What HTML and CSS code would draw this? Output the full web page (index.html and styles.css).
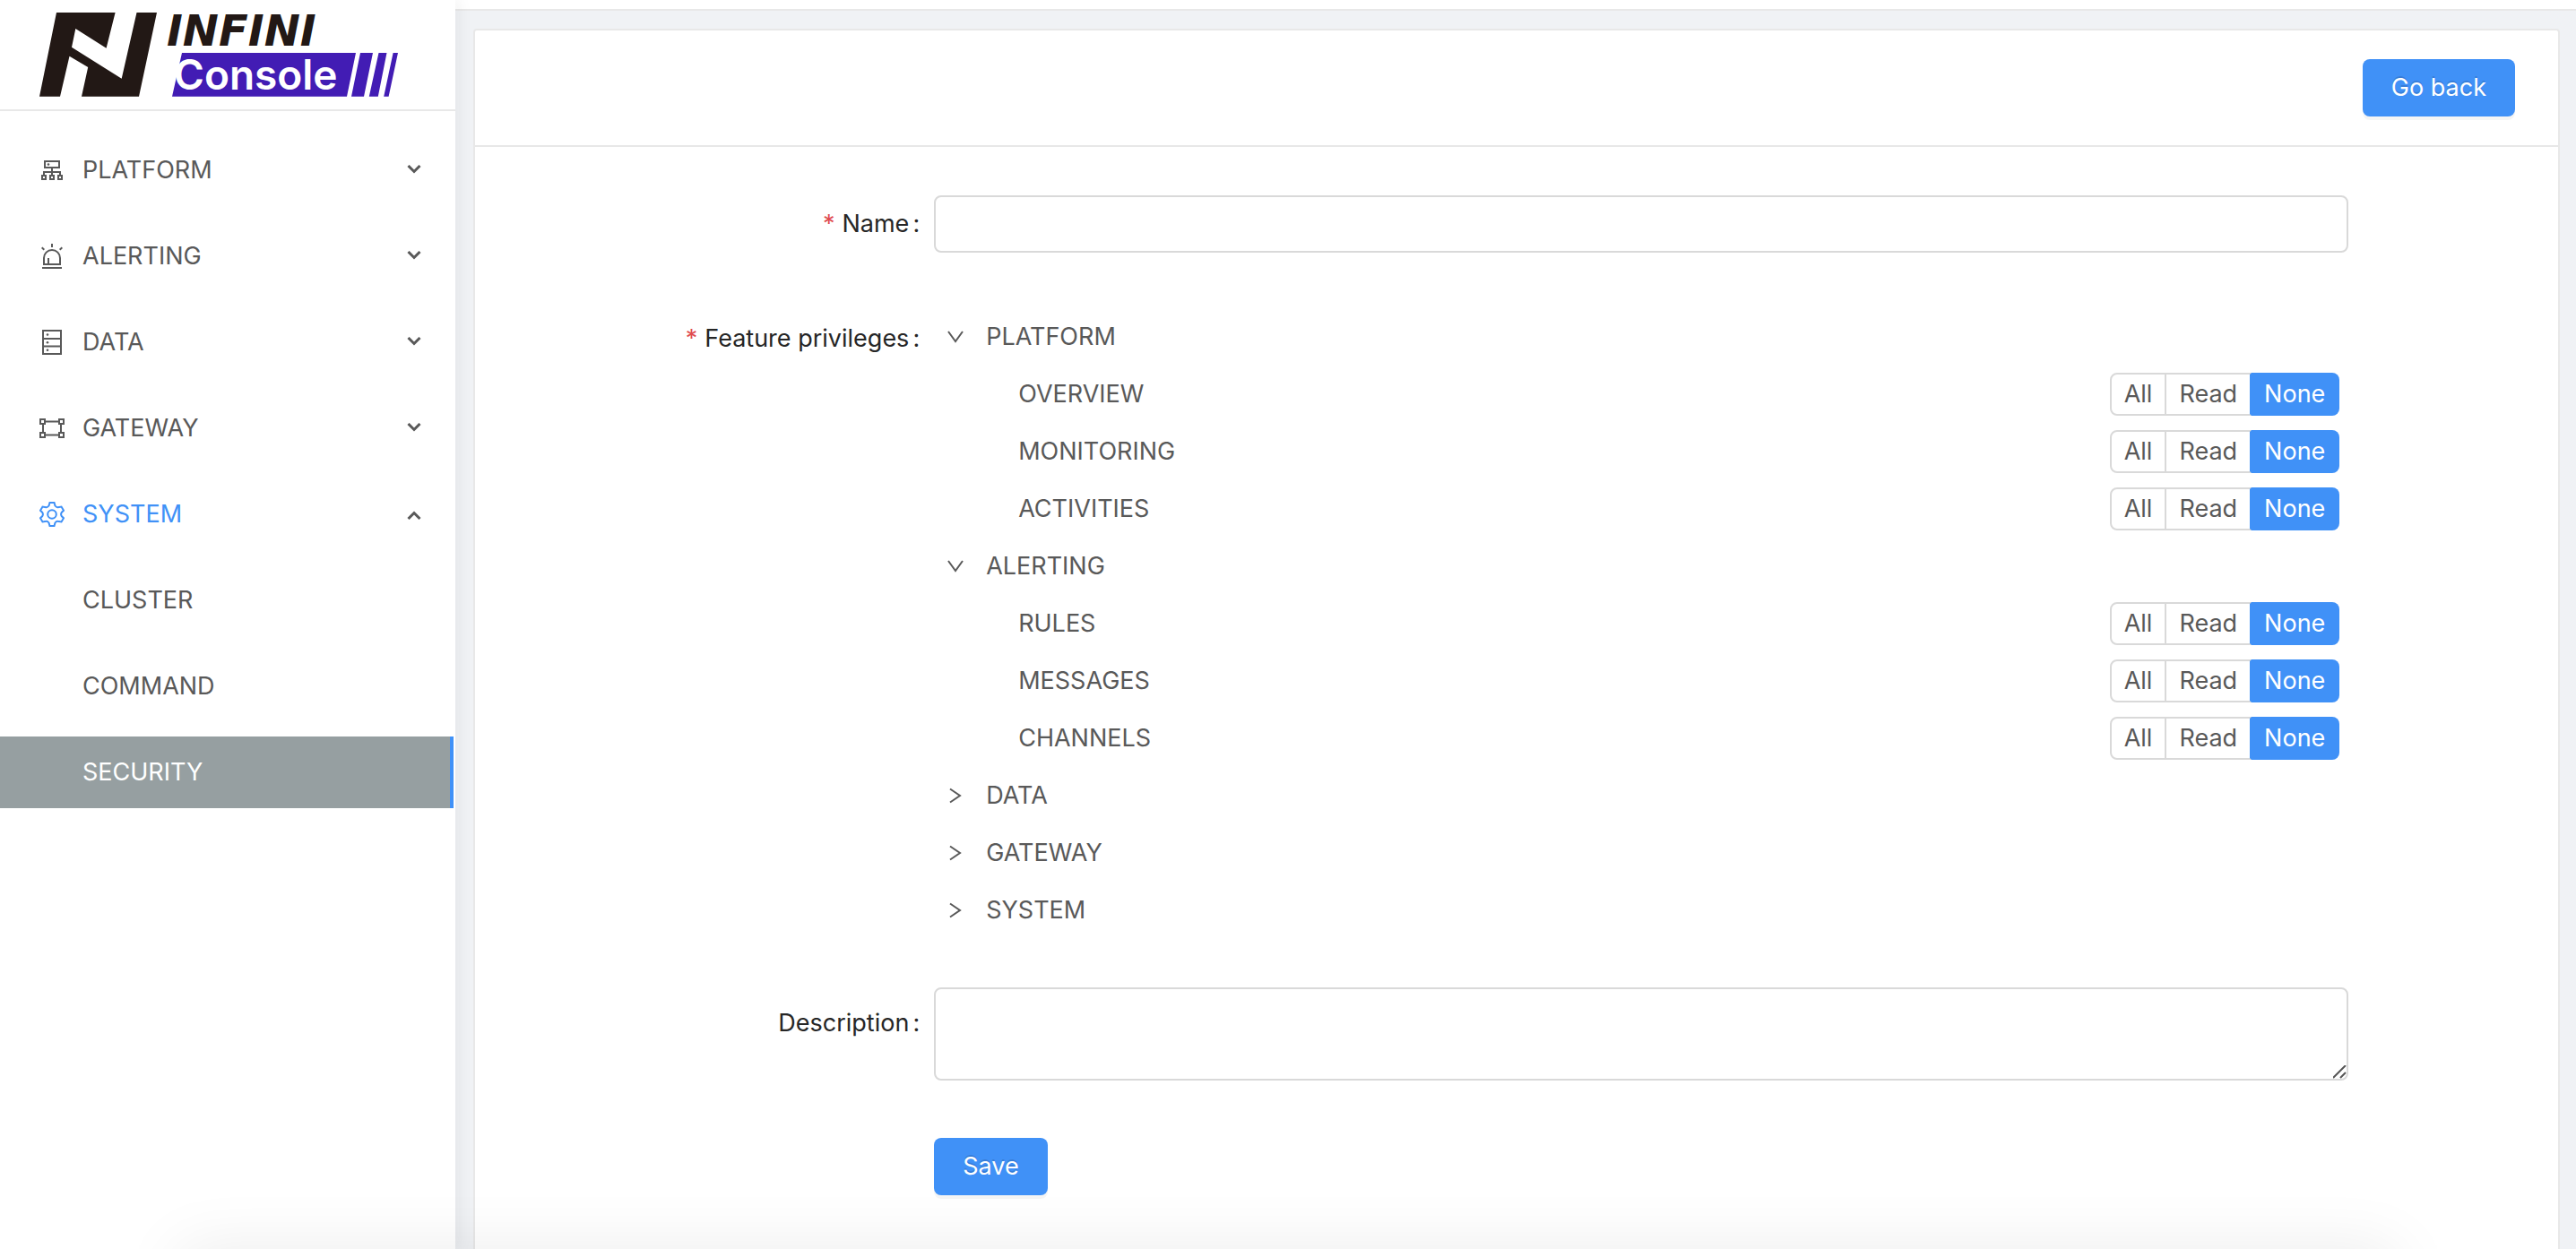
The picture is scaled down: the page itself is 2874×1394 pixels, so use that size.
FILE: index.html
```html
<!DOCTYPE html>
<html lang="en">
<head>
<meta charset="utf-8">
<title>INFINI Console - Security</title>
<link rel="stylesheet" href="styles.css">
</head>
<body>
<svg class="sprite" aria-hidden="true">
  <symbol id="caret" viewBox="0 0 16 12"><path d="M1.500 1 8 7.500 14.500 1" fill="none" stroke="currentColor" stroke-width="3"/></symbol>
  <symbol id="open" viewBox="0 0 18 14"><path d="M1 1 9 12 17 1" fill="none" stroke="currentColor" stroke-width="2"/></symbol>
  <symbol id="closed" viewBox="0 0 18 18"><path d="M3 1.500 14 9 3 16.500" fill="none" stroke="currentColor" stroke-width="2"/></symbol>
</svg>
<div class="app">
  <aside class="sidebar">
    <a class="brand" href="#" aria-label="INFINI Console">
      <svg class="logo" viewBox="44 0 404 122">
        <path class="ink" d="M63 14H128.600L118.600 53.700 84.300 32 80 52.700 135.700 87.700 152.500 14H175L155 107.700H91L98.200 75 77.500 62.700 67 107.700H44Z"/>
        <path class="purple" d="M203 59H397L387 107.700H192ZM402 59H416L406 107.700H392ZM422.500 59H431.500L421.800 107.700H411.800ZM438.600 59H444L433.600 107.700H428.200Z"/>
        <text class="word-top" x="186" y="51">INFINI</text>
        <text class="word-bottom" x="194" y="100">Console</text>
      </svg>
    </a>
    <nav class="menu">
      <button class="item" type="button">
        <svg class="icon" viewBox="0 0 28 28"><path d="M6 4H22V11H6ZM14 11V19M5 19V16H23V19M3 20H7V24H3ZM12 20H16V24H12ZM21 20H25V24H21Z"/><circle class="dot" cx="10" cy="7.500" r="1.300"/></svg>
        <span class="name">PLATFORM</span><svg class="caret"><use href="#caret"/></svg>
      </button>
      <button class="item" type="button">
        <svg class="icon" viewBox="0 0 28 28"><path d="M5 23V16A9 9 0 0 1 23 16V23ZM3 27H25M10 22V16M14 0V4M2.700 4.300 5.300 6.800M25.300 4.300 22.700 6.800"/></svg>
        <span class="name">ALERTING</span><svg class="caret"><use href="#caret"/></svg>
      </button>
      <button class="item" type="button">
        <svg class="icon" viewBox="0 0 28 28"><path d="M4 1H24V27H4ZM4 10H24M4 18.500H24"/><circle class="dot" cx="9" cy="5.500" r="1.300"/><circle class="dot" cx="9" cy="14.200" r="1.300"/><circle class="dot" cx="9" cy="22.700" r="1.300"/></svg>
        <span class="name">DATA</span><svg class="caret"><use href="#caret"/></svg>
      </button>
      <button class="item" type="button">
        <svg class="icon" viewBox="0 0 28 28"><path d="M1 4H6V9H1ZM22 4H27V9H22ZM1 19H6V24H1ZM22 19H27V24H22ZM6 6.500H22M6 21.500H22M4 9V19M24 9V19"/></svg>
        <span class="name">GATEWAY</span><svg class="caret"><use href="#caret"/></svg>
      </button>
      <button class="item current" type="button" aria-expanded="true">
        <svg class="icon" viewBox="0 0 28 28"><path d="M11.500 1H16.500L17.500 4.500Q19 6.500 20.500 6.200L24.500 5.500 27 9.800 24.700 12Q23.500 14 24.700 16L27 18.200 24.500 22.500 20.500 21.800Q19 21.500 17.500 23.500L16.500 27H11.500L10.500 23.500Q9 21.500 7.500 21.800L3.500 22.500 1 18.200 3.300 16Q4.500 14 3.300 12L1 9.800 3.500 5.500 7.500 6.200Q9 6.500 10.500 4.500Z"/><circle cx="14" cy="14" r="4.800"/></svg>
        <span class="name">SYSTEM</span><svg class="caret up"><use href="#caret"/></svg>
      </button>
      <a class="item sub" href="#">CLUSTER</a>
      <a class="item sub" href="#">COMMAND</a>
      <a class="item sub selected" href="#" aria-current="page">SECURITY</a>
    </nav>
  </aside>
  <div class="content">
    <header class="topbar"></header>
    <main class="card">
      <div class="card-head"><button class="btn" type="button">Go back</button></div>
      <form class="form">
        <div class="row">
          <label class="label required" for="name">Name</label>
          <div class="control line"><input class="input" id="name" type="text" required></div>
        </div>
        <div class="row">
          <span class="label required">Feature privileges</span>
          <div class="control tree" id="tree"></div>
        </div>
        <div class="row">
          <label class="label" for="desc">Description</label>
          <div class="control area"><textarea class="input textarea" id="desc"></textarea></div>
        </div>
        <div class="row"><div class="control line"><button class="btn" type="button">Save</button></div></div>
      </form>
    </main>
  </div>
</div>
<div class="dock-shadow"></div>
<script src="tree.js"></script>
</body>
</html>
```
FILE: tree.js
```js
const features = [
  ["PLATFORM", ["OVERVIEW", "MONITORING", "ACTIVITIES"]],
  ["ALERTING", ["RULES", "MESSAGES", "CHANNELS"]],
  ["DATA", []],
  ["GATEWAY", []],
  ["SYSTEM", []],
];

const option = (feature, value) =>
  `<label class="option"><input type="radio" name="${feature}" value="${value}"${value === "None" ? " checked" : ""}><span>${value}</span></label>`;

const leaf = (feature) =>
  `<div class="node leaf"><span>${feature}</span><div class="options" role="radiogroup" aria-label="${feature}">${["All", "Read", "None"].map((v) => option(feature, v)).join("")}</div></div>`;

document.getElementById("tree").innerHTML = features
  .map(([group, children]) => {
    const icon = children.length ? "open" : "closed";
    return `<div class="node"><button class="switch" type="button" aria-label="Toggle ${group}"><svg class="${icon}"><use href="#${icon}"/></svg></button><span>${group}</span></div>${children.map(leaf).join("")}`;
  })
  .join("");
```
FILE: styles.css
```css
* { box-sizing: border-box; }
body {
  margin: 0;
  background: #f0f2f5;
  color: #595959;
  font: 27px/42px Inter, "Liberation Sans", sans-serif;
  overflow-x: hidden;
}
button, input, textarea { font: inherit; color: inherit; }
button { border: 0; background: none; padding: 0; cursor: pointer; }
a { color: inherit; text-decoration: none; }
.sprite { position: absolute; width: 0; height: 0; }

.app { display: flex; min-height: 100vh; }

/* Sidebar */
.sidebar {
  flex: none;
  width: 508px;
  background: #fff;
  box-shadow: 4px 0 16px rgba(29, 35, 41, 0.06);
  z-index: 1;
}
.brand { display: block; height: 124px; padding: 0 44px; border-bottom: 2px solid #e8e8e8; }
.logo { display: block; width: 404px; height: 122px; }
.ink { fill: #221815; }
.purple { fill: #421cb4; }
.word-top { font: italic 700 48px/1 "DejaVu Sans", sans-serif; fill: #221815; }
.word-bottom { font: 600 46px/1 Inter, sans-serif; fill: #fff; }

.menu { display: flex; flex-direction: column; gap: 16px; padding: 26px 2px 26px 0; }
.item { display: flex; align-items: center; gap: 20px; height: 80px; padding: 0 36px 0 44px; text-align: left; }
.item .name { flex: 1; }
.icon { width: 28px; height: 28px; fill: none; stroke: currentColor; stroke-width: 2; }
.icon .dot { fill: currentColor; stroke: none; }
.caret { width: 16px; height: 12px; color: #595959; }
.caret.up { transform: rotate(180deg); }
.current { color: #4091f7; }
.sub { padding-left: 92px; }
.selected { background: #969fa1; color: #fff; border-right: 4px solid #4091f7; }

/* Content */
.content { flex: 1; display: flex; flex-direction: column; }
.topbar { height: 12px; background: #fff; border-bottom: 2px solid #e8e8e8; }
.card {
  flex: 1;
  margin: 20px 18px 0 20px;
  background: #fff;
  border: 2px solid #e8e8e8;
  border-bottom: 0;
  border-radius: 4px 4px 0 0;
}
.card-head { display: flex; justify-content: flex-end; padding: 32px 48px; border-bottom: 2px solid #e8e8e8; }
.btn {
  height: 64px;
  padding: 0 32px;
  border-radius: 8px;
  background: #4091f7;
  color: #fff;
  text-shadow: 0 -2px 0 rgba(0, 0, 0, 0.12);
  box-shadow: 0 4px 0 rgba(0, 0, 0, 0.04);
}

.form { display: flex; flex-direction: column; gap: 48px; padding: 46px 48px 24px; }
.row { display: grid; grid-template-columns: 5fr 17fr 2fr; }
.label { line-height: 80px; text-align: right; color: #262626; }
.label::after { content: ":"; margin: 0 16px 0 4px; }
.required::before { content: "*"; margin-right: 8px; color: #e04b4f; }
.control { grid-column: 2; }
.line { display: flex; align-items: center; height: 80px; }
.input { display: block; width: 100%; height: 64px; padding: 8px 22px; border: 2px solid #d9d9d9; border-radius: 8px; background: #fff; outline: 0; }
.area { padding-bottom: 8px; }
.textarea { height: 104px; resize: vertical; }
.textarea::-webkit-resizer {
  background: url("data:image/svg+xml,%3Csvg xmlns='http://www.w3.org/2000/svg' width='15' height='15'%3E%3Cpath d='M0 14 14 0M8 14 14 8' stroke='%23555' stroke-width='2'/%3E%3C/svg%3E") no-repeat;
}

/* Privilege tree */
.tree { padding: 6px 10px 6px 0; }
.node { display: flex; align-items: center; height: 64px; }
.switch { display: flex; align-items: center; justify-content: center; width: 48px; height: 48px; margin-right: 10px; }
.open { width: 18px; height: 14px; }
.closed { width: 18px; height: 18px; }
.leaf { justify-content: space-between; padding-left: 94px; }
.options { display: flex; }
.option { position: relative; line-height: 44px; padding: 0 14px; border: 2px solid #d9d9d9; border-left-width: 0; cursor: pointer; }
.option:first-child { border-left-width: 2px; border-radius: 8px 0 0 8px; }
.option:last-child { border-radius: 0 8px 8px 0; }
.option input { position: absolute; inset: 0; margin: 0; opacity: 0; }
.option:has(input:checked) { background: #4091f7; border-color: #4091f7; color: #fff; }
.option:has(+ .option input:checked) { border-right-color: #4091f7; }

/* Soft shade along the bottom edge of the window */
.dock-shadow {
  position: fixed;
  left: 7%;
  right: 7%;
  bottom: -100px;
  height: 100px;
  box-shadow: 0 0 72px rgba(0, 0, 0, 0.08);
  z-index: 2;
  pointer-events: none;
}
```
